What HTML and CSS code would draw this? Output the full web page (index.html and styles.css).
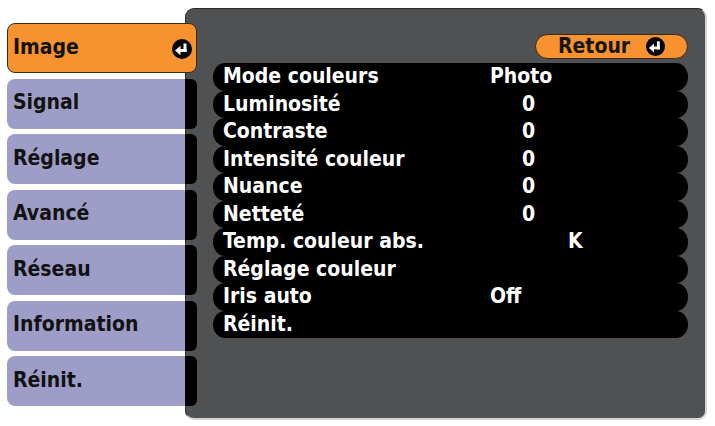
FILE: index.html
```html
<!DOCTYPE html>
<html lang="fr">
<head>
<meta charset="utf-8">
<link rel="stylesheet" href="styles.css">
</head>
<body>
<div class="screen">
  <div class="tabs">
    <div class="tab active"><span class="tab-label">Image<svg class="enter" viewBox="0 0 20 20"><circle cx="10" cy="10" r="10" fill="#000"/><rect x="11.5" y="4.5" width="3" height="8.5" fill="#fff"/><rect x="7" y="10" width="7.5" height="3" fill="#fff"/><polygon points="3,11.5 8.5,6.8 8.5,16.2" fill="#fff"/></svg></span></div>
    <div class="tab"><span class="tab-label">Signal</span><span class="tab-cap"></span></div>
    <div class="tab"><span class="tab-label">Réglage</span><span class="tab-cap"></span></div>
    <div class="tab"><span class="tab-label">Avancé</span><span class="tab-cap"></span></div>
    <div class="tab"><span class="tab-label">Réseau</span><span class="tab-cap"></span></div>
    <div class="tab"><span class="tab-label">Information</span><span class="tab-cap"></span></div>
    <div class="tab"><span class="tab-label">Réinit.</span><span class="tab-cap"></span></div>
  </div>
  <div class="panel">
    <div class="top">
      <div class="retour">Retour<svg class="enter" viewBox="0 0 20 20"><circle cx="10" cy="10" r="10" fill="#000"/><rect x="11.5" y="4.5" width="3" height="8.5" fill="#fff"/><rect x="7" y="10" width="7.5" height="3" fill="#fff"/><polygon points="3,11.5 8.5,6.8 8.5,16.2" fill="#fff"/></svg></div>
    </div>
    <div class="rows">
      <div class="row"><span class="label">Mode couleurs</span><span class="val">Photo</span></div>
      <div class="row"><span class="label">Luminosité</span><span class="val num">0</span></div>
      <div class="row"><span class="label">Contraste</span><span class="val num">0</span></div>
      <div class="row"><span class="label">Intensité couleur</span><span class="val num">0</span></div>
      <div class="row"><span class="label">Nuance</span><span class="val num">0</span></div>
      <div class="row"><span class="label">Netteté</span><span class="val num">0</span></div>
      <div class="row"><span class="label">Temp. couleur abs.</span><span class="val unit">K</span></div>
      <div class="row"><span class="label">Réglage couleur</span></div>
      <div class="row"><span class="label">Iris auto</span><span class="val">Off</span></div>
      <div class="row"><span class="label">Réinit.</span></div>
    </div>
  </div>
</div>
</body>
</html>
```
FILE: styles.css
```css
html, body {
  margin: 0;
  padding: 0;
  background: #ffffff;
}
body {
  font-family: "DejaVu Sans Condensed", "DejaVu Sans", sans-serif;
  font-stretch: condensed;
  font-weight: bold;
  font-size: 21px;
}
.screen {
  display: flex;
  width: 715px;
  height: 426px;
  box-sizing: border-box;
  padding: 8px 8px 6px 7px;
}
.tabs {
  width: 190px;
  margin-right: -12px;
  padding-top: 15px;
  display: flex;
  flex-direction: column;
  gap: 5.5px;
  position: relative;
  z-index: 2;
  flex-shrink: 0;
}
.tab {
  display: flex;
  height: 50px;
}
.tab-label {
  flex: 1;
  display: flex;
  align-items: center;
  padding-left: 6px;
  background: #9d9dc7;
  color: #121212;
  border-radius: 8px 0 0 8px;
  line-height: 1;
  padding-bottom: 2px;
}
.tab-cap {
  width: 12px;
  background: #000;
  border-radius: 0 6px 6px 0;
}
.tab.active .tab-label {
  background: #f7922f;
  border: 1px solid #3a2a1a;
  border-radius: 8px;
  justify-content: space-between;
  padding-right: 4px;
  padding-left: 5px;
}
.tab.active .enter {
  margin-top: 3px;
}
.enter {
  width: 20px;
  height: 20px;
  display: block;
}
.panel {
  flex: 1;
  background: #505153;
  border: 1px solid #2c2c2c;
  border-right: 2px solid #d4d4d4;
  border-bottom: 2px solid #d4d4d4;
  border-radius: 9px;
  padding: 25px 17px 0 27px;
  display: flex;
  flex-direction: column;
}
.top {
  display: flex;
  justify-content: flex-end;
  margin-bottom: 4px;
}
.retour {
  width: 153px;
  height: 25px;
  box-sizing: border-box;
  background: #f7922f;
  border: 1px solid #3a2a1a;
  border-radius: 13px;
  color: #161616;
  display: flex;
  align-items: center;
  padding-left: 22px;
  gap: 16px;
  line-height: 1;
}
.retour .enter {
  width: 19px;
  height: 19px;
}
.rows {
  display: flex;
  flex-direction: column;
}
.row {
  height: 27.5px;
  background: #000;
  border-radius: 12px / 13.75px;
  color: #ffffff;
  display: flex;
  align-items: flex-start;
  padding-left: 10px;
  line-height: 26px;
}
.label {
  width: 267px;
  flex-shrink: 0;
}
.val.num {
  padding-left: 32px;
}
.val.unit {
  padding-left: 78px;
}
```
